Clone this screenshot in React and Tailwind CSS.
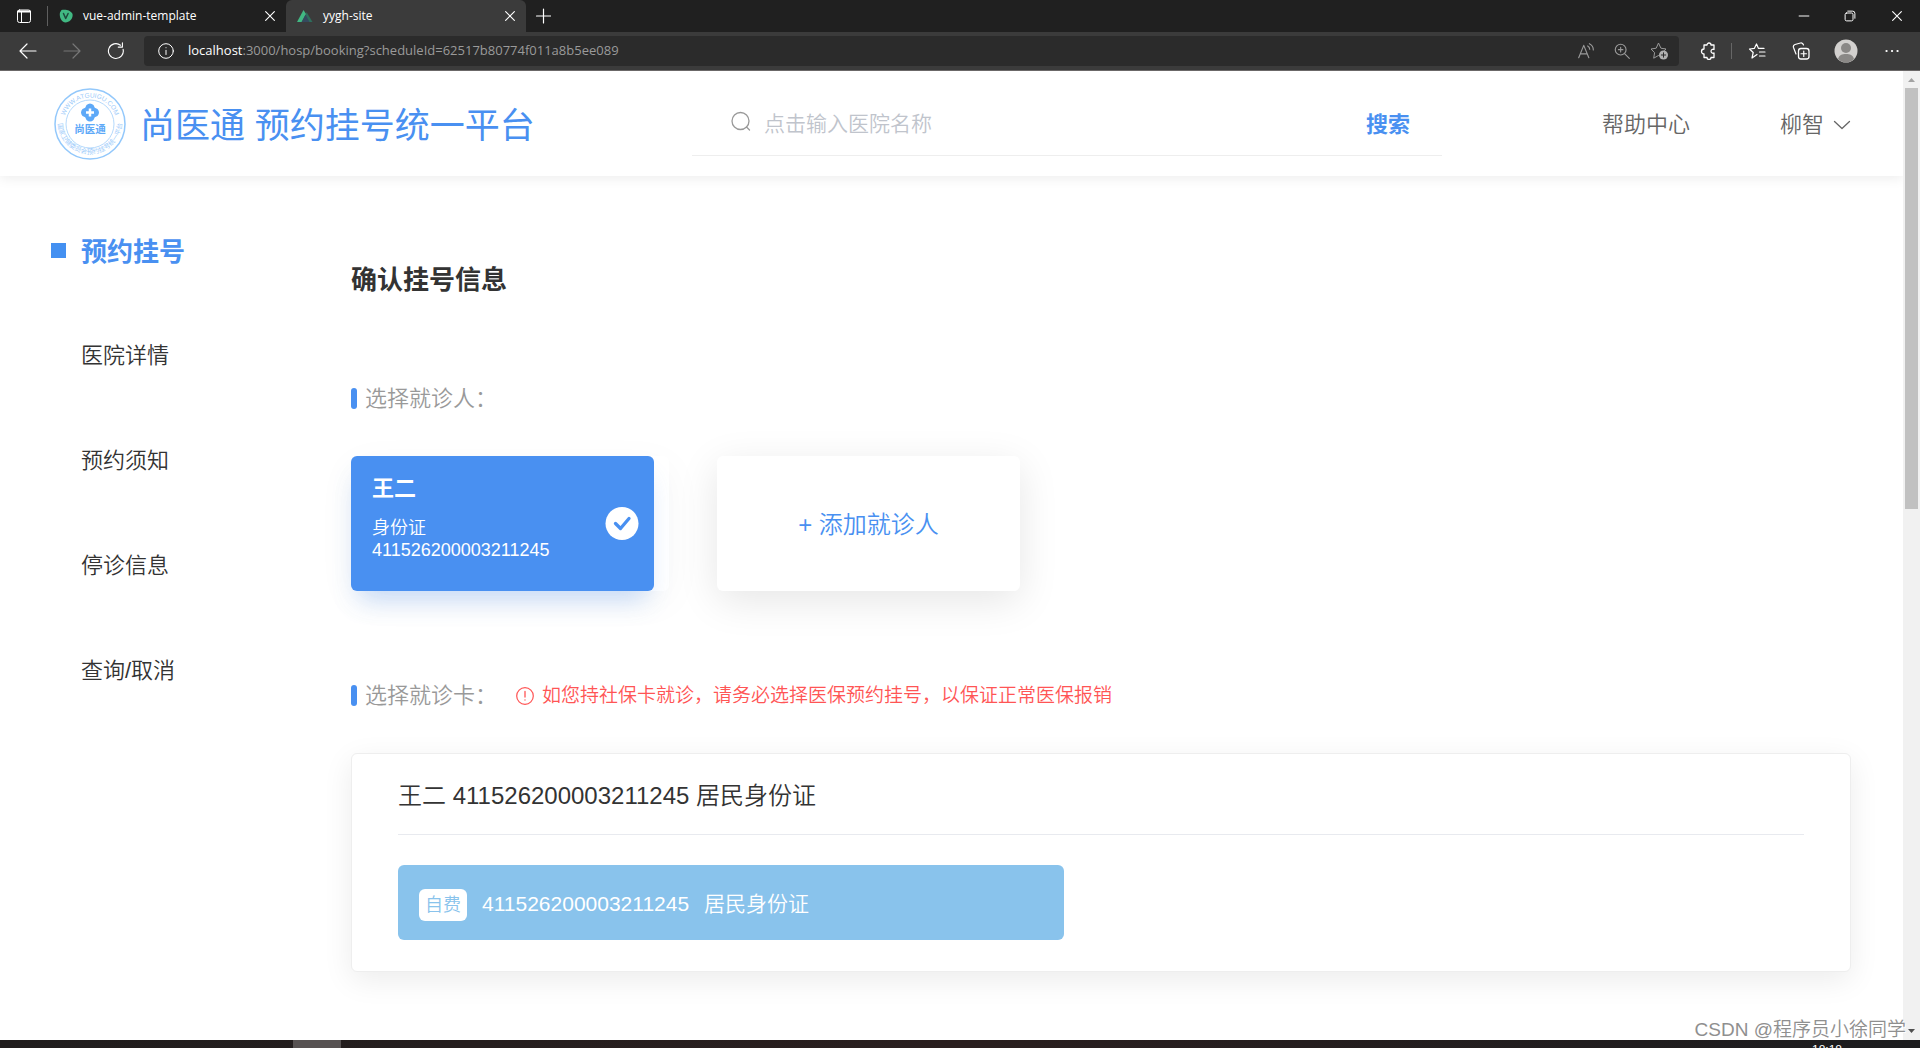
import { useState } from "react";
import clsx from "clsx";

const MENU = ["医院详情", "预约须知", "停诊信息", "查询/取消"];

const PACIENTE = {
  nombre: "王二",
  tipo: "身份证",
  numero: "411526200003211245",
};

function Svg({ className, children, ...rest }) {
  return (
    <svg
      viewBox="0 0 16 16"
      fill="none"
      stroke="currentColor"
      strokeLinecap="round"
      strokeLinejoin="round"
      aria-hidden="true"
      className={clsx("shrink-0", className)}
      {...rest}
    >
      {children}
    </svg>
  );
}

function IconClose({ className }) {
  return (
    <Svg className={className}>
      <path d="M3 3l10 10M13 3L3 13" strokeWidth="1.3" />
    </Svg>
  );
}

function Tab({ icon, title, active }) {
  return (
    <div
      className={clsx(
        "flex h-8 items-center pl-[11px] pr-[9px] text-xs text-white",
        active ? "w-60 rounded-t-md bg-[#3b3b3b]" : "w-[238px]",
      )}
    >
      {icon}
      <span className="ml-2.5 flex-1">{title}</span>
      <button type="button" aria-label={`Close ${title}`}>
        <IconClose className="h-3.5 w-3.5" />
      </button>
    </div>
  );
}

function TabStrip() {
  return (
    <div className="flex h-8 items-center bg-[#202020] text-white">
      <button type="button" aria-label="Tab actions" className="ml-4">
        <Svg className="h-4 w-4">
          <rect x="1.5" y="2" width="13" height="12.5" rx="2" />
          <path d="M2 3.500h12" strokeWidth="2" />
          <path d="M5.500 4v10" />
        </Svg>
      </button>
      <span className="ml-[15px] h-5 w-px bg-[#5f5f5f]" />
      <Tab
        title="vue-admin-template"
        icon={
          <Svg className="h-3.5 w-3.5" viewBox="0 0 14 14">
            <path d="M2.500 1C6 0 12 1 13.500 5c1 4-3 8.500-7 8.500S0 8 1 3.500z" fill="#41b983" stroke="none" />
            <path d="M4.500 4.500l2.200 5 2.400-5" stroke="#1e4a3c" strokeWidth="1.500" />
          </Svg>
        }
      />
      <Tab
        active
        title="yygh-site"
        icon={
          <Svg className="h-3.5 w-4" viewBox="0 0 16 14">
            <path d="M9.500 3l6 10h-8z" fill="#2f6e5d" stroke="none" />
            <path d="M6.500 1L0 13h5l4-8z" fill="#41b883" stroke="none" />
            <path d="M8.500 5.500L4.500 13h8z" fill="#35495e" stroke="none" />
          </Svg>
        }
      />
      <button type="button" aria-label="New tab" className="ml-[9px]">
        <Svg className="h-4 w-4">
          <path d="M8.500 1v14M1.500 8h14" strokeWidth="1.200" />
        </Svg>
      </button>
      <div className="ml-auto flex items-center gap-[34px] pr-4">
        <button type="button" aria-label="Minimize">
          <Svg className="h-3 w-3">
            <path d="M1.500 8h13" strokeWidth="1.300" />
          </Svg>
        </button>
        <button type="button" aria-label="Restore">
          <Svg className="h-3 w-3">
            <rect x="1.500" y="4" width="10.500" height="10.500" rx="2" strokeWidth="1.300" />
            <path d="M5 1.500h6.500a3 3 0 0 1 3 3V11" strokeWidth="1.300" />
          </Svg>
        </button>
        <button type="button" aria-label="Close">
          <IconClose className="h-3.5 w-3.5" />
        </button>
      </div>
    </div>
  );
}

function Toolbar() {
  return (
    <div className="flex h-[39px] items-center border-b border-[#6b6868] bg-[#3b3b3b] text-white">
      <button type="button" aria-label="Back" className="ml-4">
        <Svg className="h-4 w-6" viewBox="0 0 24 16">
          <path d="M20 8H4M11 1L4 8l7 7" strokeWidth="1.200" />
        </Svg>
      </button>
      <button type="button" aria-label="Forward" className="ml-5 text-[#777777]">
        <Svg className="h-4 w-6" viewBox="0 0 24 16">
          <path d="M4 8h16M13 1l7 7-7 7" strokeWidth="1.200" />
        </Svg>
      </button>
      <button type="button" aria-label="Refresh" className="ml-[23px]">
        <Svg className="h-[18px] w-[18px]">
          <path d="M14.300 6.500A6.600 6.600 0 1 1 12 2.900M13.700 .8v3.700H10" />
        </Svg>
      </button>
      <div className="ml-[19px] flex h-[30px] flex-1 items-center rounded bg-[#2b2b2b] pl-3.5 pr-2.5">
        <Svg className="h-4 w-4">
          <circle cx="8" cy="8" r="7.300" />
          <path d="M8 7.300v4.200M8 4.700v.1" />
        </Svg>
        <div className="ml-3.5 text-[13px] text-[#9a9a9a]">
          <span className="text-white">localhost</span>:3000/hosp/booking?scheduleId=62517b80774f011a8b5ee089
        </div>
        <div className="ml-auto flex items-center gap-[18px] text-[#9a9a9a]">
          <Svg className="h-[18px] w-[18px]">
            <path d="M1.500 14L6 3l4.500 11M3 10.500h6M9.500 3.500a3.500 3.500 0 0 1 1.800 3M11 1.500c2.200 1 3.500 3 3.500 5.500" />
          </Svg>
          <Svg className="h-[18px] w-[18px]">
            <circle cx="6.800" cy="6.800" r="4.800" />
            <path d="M10.500 10.500l4 4M6.800 4.800v4M4.800 6.800h4" />
          </Svg>
          <Svg className="h-5 w-5" viewBox="0 0 20 20">
            <path d="M9.500 14.500l-4.800 2.700.9-5.500L2 8l5.200-.8L9.500 2l2.400 5.200L17 8l-1.500 1.500" />
            <circle cx="14.500" cy="14" r="4.500" fill="#b0b0b0" stroke="none" />
            <path d="M14.500 11.800v4.400M12.300 14h4.400" stroke="#2b2b2b" />
          </Svg>
        </div>
      </div>
      <div className="flex items-center pl-5 pr-[18px]">
        <Svg className="h-[18px] w-[18px]" viewBox="0 0 18 18">
          <path d="M5 3h3a2 2 0 0 1 4 0h3v4.500a2 2 0 1 0 0 3.500v4.500h-3a2 2 0 0 1-4 0H5V12a2.500 2.500 0 0 1 0-5z" strokeWidth="1.300" />
        </Svg>
        <span className="ml-3.5 h-4 w-px bg-[#666666]" />
        <Svg className="ml-4 h-[18px] w-[18px]" viewBox="0 0 18 18">
          <path d="M9 12.500l-5 3.500 1.200-5.500L1.500 7l4.800-.6L8.500 2l2 4.400H16M11.500 10H17M11.500 14H17" strokeWidth="1.200" />
        </Svg>
        <Svg className="ml-[26px] h-[18px] w-[18px]" viewBox="0 0 18 18">
          <rect x="6.500" y="6.500" width="10.500" height="10.500" rx="2.500" strokeWidth="1.300" />
          <path d="M11.750 9v5.500M9 11.750h5.500M4 12L1.500 5.500C1 4 1.700 3 3 2.500L8.500 1c1.500-.3 2.500.3 3 2" strokeWidth="1.200" />
        </Svg>
        <svg viewBox="0 0 24 24" className="ml-6 h-6 w-6" aria-hidden="true">
          <circle cx="12" cy="12" r="11.500" fill="#d2d0ce" />
          <circle cx="12" cy="9" r="5" fill="#8a8886" />
          <path d="M4 20c1-4 4-5 8-5s7 1 8 5c-4 4.500-12 4.500-16 0z" fill="#8a8886" />
        </svg>
        <Svg className="ml-6 h-4 w-5">
          <path d="M2.500 8h.1M8 8h.1M13.500 8h.1" strokeWidth="2.200" />
        </Svg>
      </div>
    </div>
  );
}

function Logo() {
  return (
    <svg viewBox="0 0 72 72" className="h-[72px] w-[72px] shrink-0" role="img" aria-label="尚医通">
      <defs>
        <path id="arco-sup" d="M9.500 36a26.500 26.500 0 0 1 53 0" />
        <path id="arco-inf" d="M4 34a32 32 0 1 0 64 0" />
      </defs>
      <circle cx="36" cy="36" r="35" fill="none" stroke="#93c8fb" strokeWidth="1.500" />
      <circle cx="36" cy="36" r="24" fill="none" stroke="#b5d9fc" />
      <g fill="#9ccbfa" fontFamily="'Liberation Sans', 'Noto Sans CJK SC', sans-serif">
        <text fontSize="6.500">
          <textPath href="#arco-sup" startOffset="50%" textAnchor="middle">
            WWW.ATGUIGU.COM
          </textPath>
        </text>
        <text fontSize="6.500">
          <textPath href="#arco-inf" startOffset="50%" textAnchor="middle">
            国家卫健委员会预约挂号统一平台
          </textPath>
        </text>
        <text x="36" y="44.500" textAnchor="middle" fontSize="10.500" fontWeight="700" fill="#5ea9f8">
          尚医通
        </text>
      </g>
      <path d="M32.500 17q3.500-3 7 0l1.300 2.700L43.500 21q3 3.500 0 7l-2.700 1.300L39.500 32q-3.500 3-7 0l-1.300-2.700L28.500 28q-3-3.500 0-7l2.700-1.300z" fill="#5ea9f8" />
      <path d="M36 20.500v8M32 24.500h8" stroke="#fff" strokeWidth="2.500" />
    </svg>
  );
}

function Header() {
  const [busqueda, setBusqueda] = useState("");
  return (
    <header className="flex h-[105px] items-center bg-white pl-[54px] pr-[51px] shadow-[0_2px_12px_rgba(0,0,0,0.08)]">
      <a href="#inicio" className="flex items-center gap-3.5 text-[#4990f1]">
        <Logo />
        <span className="pt-1 text-[35px] leading-[40px]">尚医通 预约挂号统一平台</span>
      </a>
      <form
        onSubmit={(e) => e.preventDefault()}
        className="ml-auto flex h-16 w-[750px] items-center border-b border-[#eeeeee] pl-[38px] pr-8"
      >
        <Svg className="mb-1 h-[22px] w-[22px] text-[#999999]" viewBox="0 0 22 22">
          <circle cx="10.500" cy="11" r="8.500" strokeWidth="1.300" />
          <path d="M16.500 17l3 3" strokeWidth="1.300" />
        </Svg>
        <input
          type="text"
          aria-label="点击输入医院名称"
          placeholder="点击输入医院名称"
          value={busqueda}
          onChange={(e) => setBusqueda(e.target.value)}
          className="ml-3 flex-1 pt-0.5 text-[21px] font-[350] outline-none placeholder:text-[#c0c4cc]"
        />
        <button type="submit" className="pt-0.5 text-[22px] font-bold text-[#4990f1]">
          搜索
        </button>
      </form>
      <nav className="ml-40 flex items-center pt-0.5 text-[22px] font-[350] text-[#666666]">
        <a href="#ayuda">帮助中心</a>
        <button type="button" className="ml-[90px] flex items-center gap-2">
          柳智
          <Svg className="h-5 w-5" viewBox="0 0 20 20">
            <path d="M2.500 6.500L10 13.500l7.500-7" strokeWidth="1.300" />
          </Svg>
        </button>
      </nav>
    </header>
  );
}

function Sidebar() {
  return (
    <nav className="w-[300px] shrink-0 pl-[51px] pt-14">
      <a href="#reserva" className="flex h-10 items-center text-[26px] font-bold text-[#4990f1]">
        <span className="mb-1 mr-[15px] h-[15px] w-[15px] bg-[#4490f1]" />
        预约挂号
      </a>
      <ul className="mt-16 flex flex-col gap-[65px] pl-[30px]">
        {MENU.map((m) => (
          <li key={m}>
            <a href="#menu" className="block text-[22px] font-[350] leading-10 text-[#333333]">
              {m}
            </a>
          </li>
        ))}
      </ul>
    </nav>
  );
}

function SectionTitle({ children }) {
  return (
    <h2 className="flex h-8 items-center text-[22px] font-[350] text-[#999999]">
      <span className="mr-2 h-[21px] w-1.5 rounded-full bg-[#4990f1]" />
      {children}
    </h2>
  );
}

function Booking() {
  const [elegido, setElegido] = useState(true);
  return (
    <main className="flex-1 pb-[68px] pl-[51px] pr-[52px] pt-[84px]">
      <h1 className="text-[26px] font-bold leading-10 text-[#333333]">确认挂号信息</h1>

      <div className="mt-[82px]">
        <SectionTitle>选择就诊人：</SectionTitle>
      </div>
      <div className="mt-[42px] flex gap-12">
        <div className="w-[318px] rounded-md bg-white shadow-[0_10px_40px_rgba(0,0,0,0.04)]">
          <button
            type="button"
            aria-pressed={elegido}
            onClick={() => setElegido(!elegido)}
            className="flex h-[135px] w-[303px] items-center justify-between rounded-md bg-[#4990f1] pl-[21px] pr-[15px] text-left text-white shadow-[0_16px_24px_-8px_rgba(73,144,241,0.3)]"
          >
            <span className="flex flex-col pb-3.5">
              <span className="mb-3 text-[22px] font-bold leading-8">{PACIENTE.nombre}</span>
              <span className="text-lg font-[350] leading-[22px]">{PACIENTE.tipo}</span>
              <span className="text-lg leading-[22px]">{PACIENTE.numero}</span>
            </span>
            {elegido && (
              <svg viewBox="0 0 34 34" className="h-[34px] w-[34px]" aria-hidden="true">
                <circle cx="17" cy="16.500" r="16.500" fill="#fff" />
                <path d="M10.500 16.500l5 5L24 11.500" fill="none" stroke="#4990f1" strokeWidth="3.300" strokeLinecap="round" strokeLinejoin="round" />
              </svg>
            )}
          </button>
        </div>
        <button
          type="button"
          className="h-[135px] w-[303px] rounded-md bg-white pt-0.5 text-2xl font-[350] text-[#4990f1] shadow-[0_10px_40px_rgba(0,0,0,0.1)]"
        >
          + 添加就诊人
        </button>
      </div>

      <div className="mt-[88px] flex items-center gap-[19px]">
        <SectionTitle>选择就诊卡：</SectionTitle>
        <p className="flex items-center gap-2 pt-0.5 text-[19px] font-[350] text-[#ff5555]">
          <Svg className="h-[18px] w-[18px]" viewBox="0 0 18 18">
            <circle cx="9" cy="9" r="8.300" strokeWidth="1.200" />
            <path d="M9 4.500v5.500M9 12.800v.2" strokeWidth="1.300" />
          </Svg>
          如您持社保卡就诊，请务必选择医保预约挂号，以保证正常医保报销
        </p>
      </div>
      <section className="mt-[42px] rounded-md border border-[#eeeeee] bg-white px-[46px] pb-[31px] shadow-[0_8px_30px_rgba(0,0,0,0.08)]">
        <h3 className="border-b border-[#e8eaef] pb-[18px] pt-[22px] text-2xl font-[350] leading-10 text-[#333333]">
          {PACIENTE.nombre} {PACIENTE.numero} 居民身份证
        </h3>
        <button
          type="button"
          className="mt-[30px] flex h-[75px] w-[666px] items-center rounded-md bg-[#89c3ec] pl-[21px] pt-0.5 text-[21px] font-[350] text-white"
        >
          <span className="mr-[15px] mt-0.5 flex h-8 w-12 items-center justify-center rounded-md bg-white text-lg text-[#89c3ec]">
            自费
          </span>
          <span>{PACIENTE.numero}</span>
          <span className="ml-[15px]">居民身份证</span>
        </button>
      </section>
    </main>
  );
}

function Scrollbar() {
  return (
    <div className="flex w-[17px] shrink-0 flex-col items-center bg-[#f1f1f1]">
      <svg viewBox="0 0 17 17" className="h-[17px] w-[17px]" aria-hidden="true">
        <path d="M5 11l3.500-4 3.500 4z" fill="#a3a3a3" />
      </svg>
      <div className="h-[421px] w-[13px] bg-[#c1c1c1]" />
      <svg viewBox="0 0 17 17" className="mt-auto h-[17px] w-[17px]" aria-hidden="true">
        <path d="M5 6l3.500 4L12 6z" fill="#505050" />
      </svg>
    </div>
  );
}

export default function App() {
  return (
    <div className="flex h-screen flex-col overflow-hidden bg-white font-['Liberation_Sans','Noto_Sans_CJK_SC',sans-serif]">
      <div className="font-['Open_Sans','Noto_Sans_CJK_SC',sans-serif]">
        <TabStrip />
        <Toolbar />
      </div>
      <div className="flex min-h-0 flex-1">
        <div className="min-w-0 flex-1 overflow-hidden">
          <Header />
          <div className="flex">
            <Sidebar />
            <Booking />
          </div>
        </div>
        <Scrollbar />
      </div>
      <footer className="relative flex h-2 shrink-0 bg-linear-to-r from-[#201d1d] via-[#2a1f1f] to-[#1c1c1e]">
        <span className="ml-[293px] h-2 w-12 bg-[#575252]" />
        <span className="ml-auto mr-[78px] h-2 overflow-hidden pt-0.5 text-xs leading-4 text-white">18:18</span>
        <p className="absolute bottom-1.5 right-3.5 text-[19px] font-[350] leading-6 text-[#8f8f8f] [text-shadow:1px_1px_0_#ffffff]">
          CSDN @程序员小徐同学
        </p>
      </footer>
    </div>
  );
}
